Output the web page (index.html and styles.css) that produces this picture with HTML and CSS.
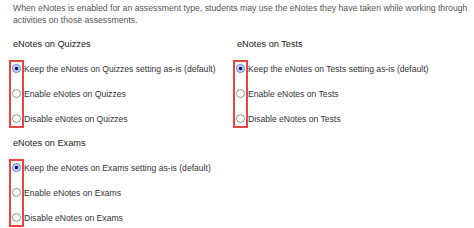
FILE: index.html
```html
<!DOCTYPE html>
<html lang="en">
<head>
    <meta charset="UTF-8">
    <meta name="viewport" content="width=device-width, initial-scale=1.0">
    <title>eNotes settings</title>
    <link rel="stylesheet" href="styles.css">
</head>
<body>
    <p class="intro">When eNotes is enabled for an assessment type, students may use the eNotes they have taken while working through activities on those assessments.</p>

    <div class="groups">
        <div class="group">
            <div class="group-title">eNotes on Quizzes</div>
            <div class="options">
                <label class="option"><input type="radio" name="quizzes" checked> Keep the eNotes on Quizzes setting as-is (default)</label>
                <label class="option"><input type="radio" name="quizzes"> Enable eNotes on Quizzes</label>
                <label class="option"><input type="radio" name="quizzes"> Disable eNotes on Quizzes</label>
                <span class="highlight"></span>
            </div>
        </div>

        <div class="group">
            <div class="group-title">eNotes on Tests</div>
            <div class="options">
                <label class="option"><input type="radio" name="tests" checked> Keep the eNotes on Tests setting as-is (default)</label>
                <label class="option"><input type="radio" name="tests"> Enable eNotes on Tests</label>
                <label class="option"><input type="radio" name="tests"> Disable eNotes on Tests</label>
                <span class="highlight"></span>
            </div>
        </div>

        <div class="group">
            <div class="group-title">eNotes on Exams</div>
            <div class="options">
                <label class="option"><input type="radio" name="exams" checked> Keep the eNotes on Exams setting as-is (default)</label>
                <label class="option"><input type="radio" name="exams"> Enable eNotes on Exams</label>
                <label class="option"><input type="radio" name="exams"> Disable eNotes on Exams</label>
                <span class="highlight"></span>
            </div>
        </div>
    </div>
</body>
</html>
```

FILE: styles.css
```css
body {
    font-family: 'Liberation Sans', Arial, sans-serif;
    margin: 0;
    padding: 2px 0 0 13px;
    background: #fff;
    color: #333;
}

.intro {
    margin: 0 0 12px;
    font-size: 8.7px;
    line-height: 12px;
    color: #555;
}

.groups {
    display: grid;
    grid-template-columns: 224px 1fr;
    row-gap: 6px;
}

.group-title {
    font-size: 9.2px;
    line-height: 12px;
    color: #222;
    margin-bottom: 6px;
}

.options {
    position: relative;
}

.option {
    display: flex;
    align-items: center;
    height: 25px;
    font-size: 8.6px;
    color: #333;
}

.option input {
    appearance: none;
    -webkit-appearance: none;
    width: 9px;
    height: 9px;
    margin: 0 3px 0 -1px;
    border: 1px solid #8f8f8f;
    border-radius: 50%;
    background: #fff;
    flex: none;
}

.option input:checked {
    border-color: #5a78d8;
    background: radial-gradient(circle, #141480 0 32%, #c9d4f6 42%, #e4e9fb 100%);
}

.highlight {
    position: absolute;
    left: -4px;
    top: 4px;
    width: 11px;
    bottom: 3px;
    border: 2px solid #e8463c;
}
```
